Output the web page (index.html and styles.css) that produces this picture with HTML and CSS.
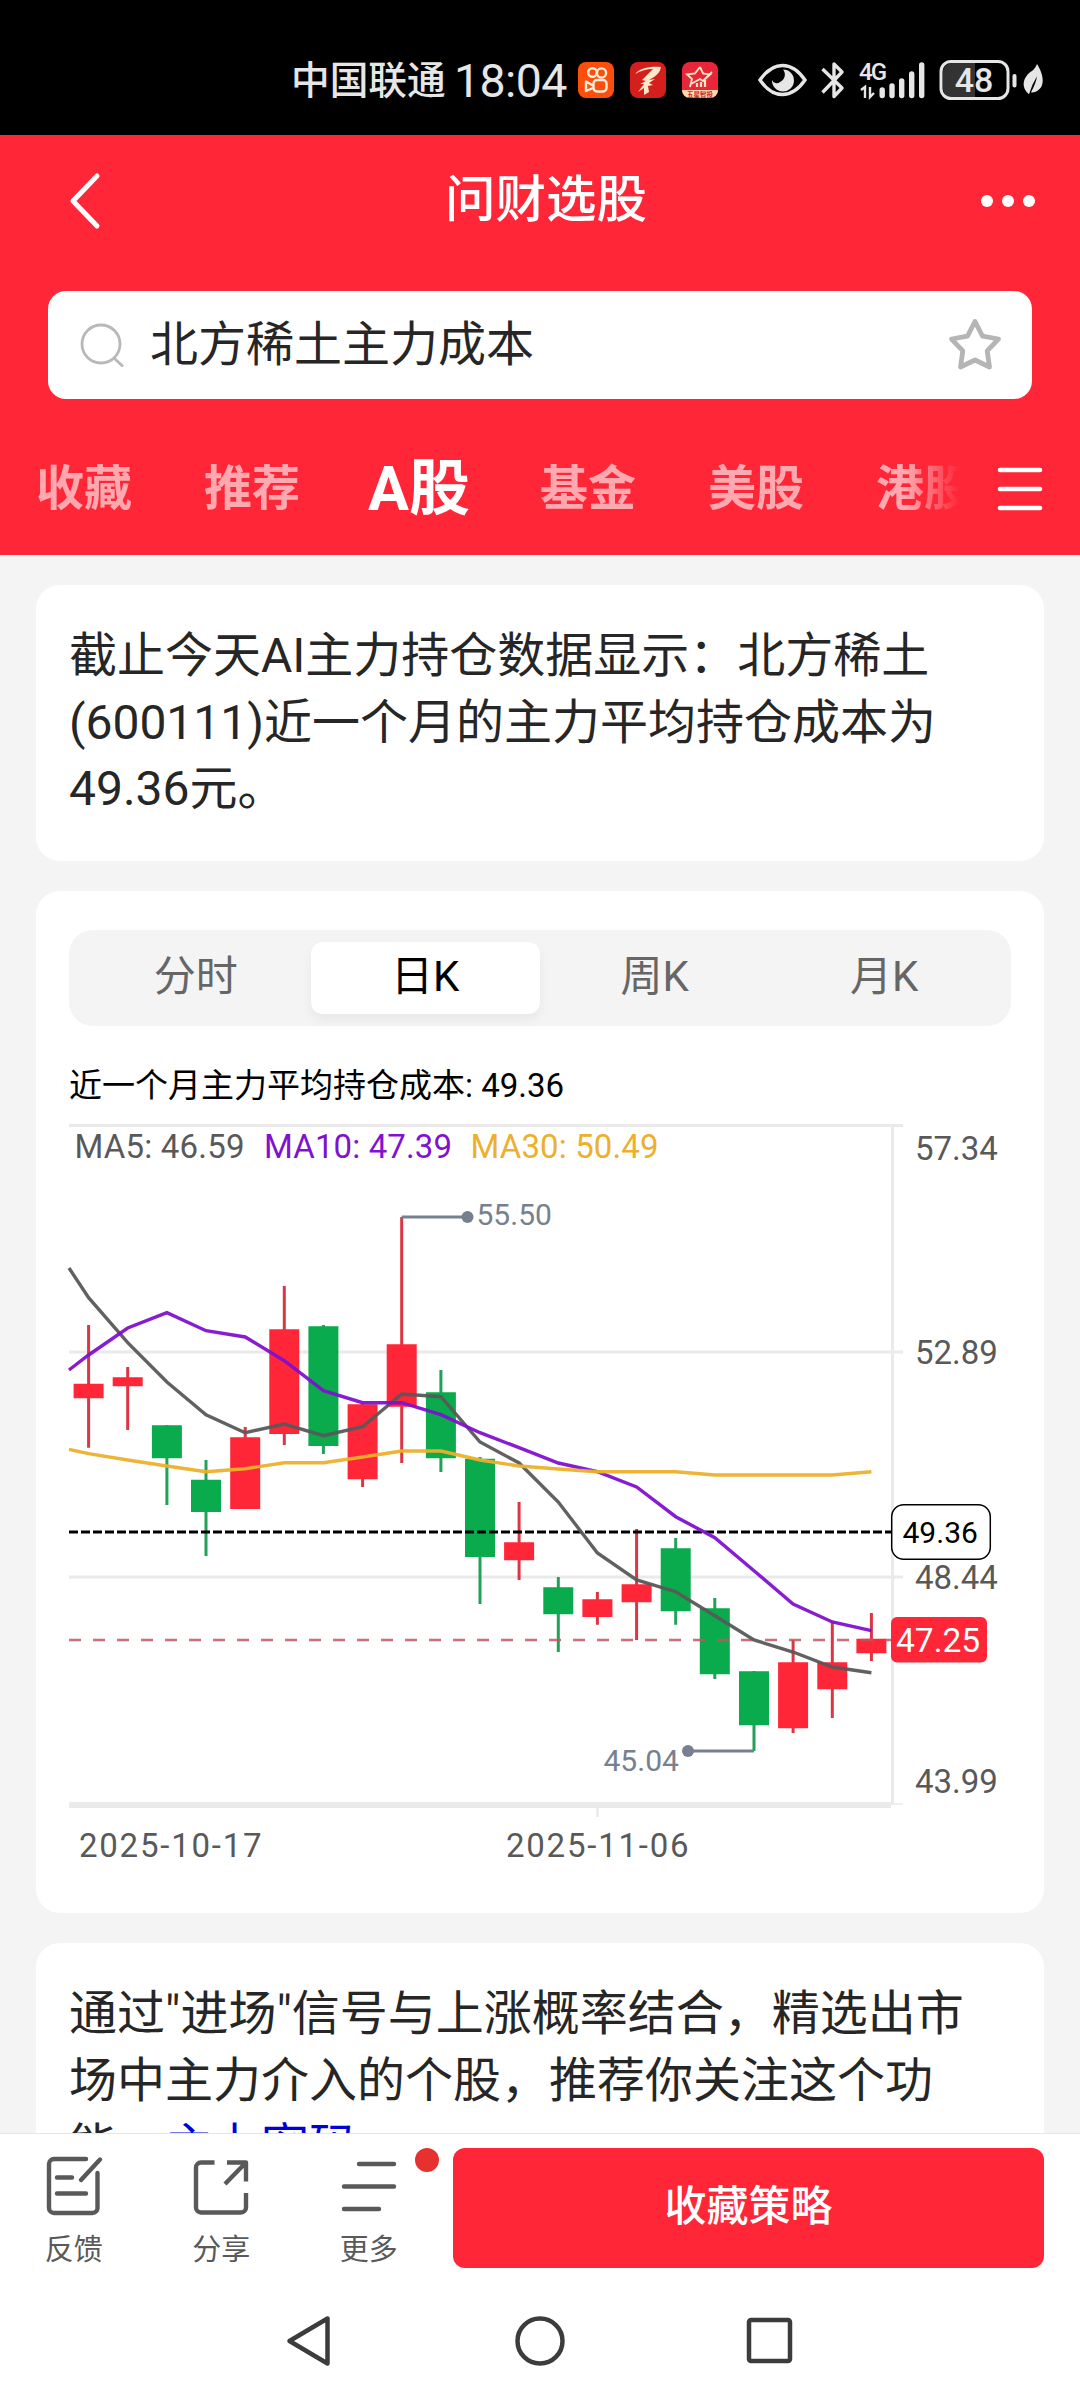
FILE: index.html
```html
<!DOCTYPE html>
<html lang="zh-CN">
<head>
<meta charset="utf-8">
<title>问财选股</title>
<link rel="stylesheet" href="styles.css">
</head>
<body>
<div class="screen">
  <div class="status">
    <span class="carrier">中国联通</span>
    <span class="clock">18:04</span>
    <svg class="apps" width="140" height="36" viewBox="578 63 140 36">
      <rect x="578" y="63" width="36" height="36" rx="8" fill="#ff4e0c"/>
      <g fill="none" stroke="#fff0dc" stroke-width="2.4">
        <circle cx="592.5" cy="73.5" r="4.3"/><circle cx="601.5" cy="74" r="4.6"/>
        <rect x="593.5" y="81" width="13" height="11.5" rx="3.5"/>
        <path d="M593 86.500l-7-4v9.500l7-3" stroke-linejoin="round"/>
      </g>
      <rect x="630" y="63" width="36" height="36" rx="8" fill="#d41f1c"/>
      <path d="M635 75c5-6 15-8 26-7c-1 6-5 9-12 13l6-1l-6 4l4 2l-5 1l1 6l-5 3v-7l-6 4l6-8l-4 0l6-3l-4-1l11-11c-7 0-13 2-18 5z" fill="#ffe9c9"/>
      <rect x="682" y="63" width="36" height="36" rx="8" fill="#e9253a"/>
      <path d="M682 91h36a8 8 0 0 1-8 8h-20a8 8 0 0 1-8-8z" fill="#ffd9a8"/>
      <path d="M700 68l3 6.500l7 1l-5 4.500M690 88l2-8l-5-4.500l8-1l5-6.500M691 85l9-5l3 2l9-9" fill="none" stroke="#ffe6c4" stroke-width="1.800"/>
      <path d="M697 88v-4M701 88v-5M705 88v-7" stroke="#ffe6c4" stroke-width="2.200"/>
      <text x="700" y="97.500" class="app-label">五星智投</text>
    </svg>
    <svg class="system" width="290" height="44" viewBox="756 58 290 44" fill="none" stroke="#e6e6e6">
      <path d="M760 80q10-14.500 22.500-14.500T805 80q-10 14.500-22.500 14.500T760 80z" stroke-width="3.400"/>
      <path d="M783 69.500a11 11 0 1 1-11 10.500a5 5 0 0 0 8 2a8 8 0 0 0 3-12.500z" fill="#e6e6e6" stroke="none"/>
      <path d="M822.500 69l19.500 19l-8 8.500v-32.500l8 8l-19.500 20.500" stroke-width="3.400" stroke-linejoin="round"/>
      <text x="859" y="80" class="net" stroke="none">4G</text>
      <path d="M861 90l4-3v11M870 87v10l4-4" stroke-width="2.400"/>
      <path d="M882.200 90v5.500M892 86v9.500M901.700 81v14.500M911.700 74v21.500M921.700 65v30.500" stroke-width="5.400" stroke-linecap="round"/>
      <path d="M952 63h23v35h-23a9 9 0 0 1-9-9v-17a9 9 0 0 1 9-9z" fill="#333" stroke="none"/>
      <rect x="941" y="61.500" width="67" height="37" rx="10" stroke-width="3"/>
      <path d="M1014.500 76v9.500" stroke-width="4" stroke-linecap="round"/>
      <text x="974" y="92" class="level" stroke="none">48</text>
      <path d="M1037 64c7 11 9 24-2 28q-2 .6-4 .3q5-9 6-16q-5 8-8 18c-9-8-5-17 1-22q5-3 7-8.300z" fill="#e6e6e6" stroke="none"/>
    </svg>
  </div>

  <header class="top">
    <div class="titlebar">
      <svg width="36" height="60" viewBox="0 0 36 60"><path d="M30 5L6 30l24 25" fill="none" stroke="#fff" stroke-width="5" stroke-linecap="round" stroke-linejoin="round"/></svg>
      <h1>问财选股</h1>
      <svg width="56" height="14" viewBox="0 0 56 14" fill="#fff"><circle cx="7" cy="7" r="6"/><circle cx="28" cy="7" r="6"/><circle cx="49" cy="7" r="6"/></svg>
    </div>
    <div class="search">
      <svg width="48" height="48" viewBox="0 0 48 48" fill="none" stroke="#b8b8b8" stroke-width="2.800"><circle cx="23" cy="23" r="19"/><path d="M36 37l9 8.500"/></svg>
      <span class="query">北方稀土主力成本</span>
      <svg width="58" height="56" viewBox="0 0 58 56"><path d="M29 4.500l7.500 14.700l16 2.800l-11.300 11.800l2.300 16.200l-14.500-7l-14.500 7l2.300-16.200L5.500 22l16-2.800z" fill="none" stroke="#b5b5b5" stroke-width="4.800" stroke-linejoin="round"/></svg>
    </div>
    <nav class="tabs">
      <div class="tablist">
        <span>收藏</span><span>推荐</span><span class="current">A股</span><span>基金</span><span>美股</span><span>港股</span>
      </div>
      <svg width="46" height="44" viewBox="0 0 46 44"><path d="M3 3h40M3 22h40M3 41h40" stroke="#fff" stroke-width="4.500" stroke-linecap="round"/></svg>
    </nav>
  </header>

  <main>
    <section class="card note">截止今天AI主力持仓数据显示：北方稀土<br>(600111)近一个月的主力平均持仓成本为<br>49.36元。</section>

    <section class="card quote">
      <div class="segments"><span>分时</span><span class="on">日K</span><span>周K</span><span>月K</span></div>
      <p class="cost">近一个月主力平均持仓成本: 49.36</p>
      <svg class="chart" width="942" height="740" viewBox="69 1120 942 740">
        <g class="grid">
          <path d="M69 1125.500H903" stroke-width="3"/>
          <path d="M69 1352H903M69 1577H903" stroke-width="3"/>
          <path d="M892.500 1125V1804" stroke-width="3"/>
          <path d="M69 1805H891" stroke-width="6"/>
          <path d="M891 1804H903" stroke-width="1.500"/>
          <path d="M597.500 1808V1817" stroke-width="2.500"/>
        </g>
        <!-- candle wicks -->
        <path class="wick up" d="M88.600 1325V1447.700M127.700 1367V1430M245.200 1427V1440M284.300 1286V1445M362.600 1404V1487M401.700 1217V1463M519.100 1502V1580M597.400 1592V1624.700M636.600 1529V1640M793.100 1640V1733M832.300 1622V1718M871.400 1613V1661"/>
        <path class="wick down" d="M166.900 1425V1505M206 1460V1556M323.400 1325V1454M440.900 1370V1472M480 1457V1604M558.300 1577V1652M675.700 1538V1624.700M714.800 1598V1679M754 1671V1751"/>
        <!-- candle bodies -->
        <path class="body up" d="M88.600 1383.700V1398.300M127.700 1377.300V1386.300M245.200 1437.300V1509M284.300 1329.300V1434M362.600 1404.300V1479.300M401.700 1344.300V1406.700M519.100 1542.300V1560.300M597.400 1599.300V1617M636.600 1584.300V1602.300M793.100 1662.300V1728.300M832.300 1662.300V1689.300M871.400 1638.700V1653.300"/>
        <path class="body down" d="M166.900 1425.300V1458.300M206 1479.700V1512M323.400 1326.300V1446M440.900 1392.300V1458.300M480 1458.700V1557M558.300 1587.300V1614.300M675.700 1548.300V1611.300M714.800 1608.300V1674.300M754 1671.300V1725.300"/>
        <!-- reference levels -->
        <path d="M69 1532H891" stroke="#000" stroke-width="3" stroke-dasharray="9 3"/>
        <path d="M69 1640H891" stroke="#c25560" stroke-opacity=".85" stroke-width="2.400" stroke-dasharray="12 12"/>
        <!-- moving averages -->
        <polyline class="ma" stroke="#595959" points="69,1268 88.600,1297.700 127.700,1342.700 166.900,1382 206,1414.700 245.200,1432.700 284.300,1424 323.400,1435.700 362.600,1426.700 401.700,1394 440.900,1396.700 480,1442 519.100,1463 558.300,1502 597.400,1553 636.600,1580 675.700,1591.700 714.800,1615.700 754,1640 793.100,1652 832.300,1667 871.400,1672.700"/>
        <polyline class="ma" stroke="#8110d0" points="69,1370 88.600,1355 127.700,1328 166.900,1312.700 206,1330.700 245.200,1337 284.300,1360.700 323.400,1390.700 362.600,1402.700 401.700,1402.700 440.900,1414.700 480,1432.700 519.100,1447.700 558.300,1463 597.400,1471.700 636.600,1487 675.700,1516.700 714.800,1537.700 754,1570.700 793.100,1604 832.300,1622 871.400,1630.700"/>
        <polyline class="ma" stroke="#ecb02b" points="69,1449.300 88.600,1453.700 127.700,1460 166.900,1466 206,1471.700 245.200,1468.700 284.300,1462.700 323.400,1462.700 362.600,1457 401.700,1451 440.900,1451 480,1460 519.100,1466 558.300,1469 597.400,1471.700 675.700,1471.700 714.800,1475 832.300,1475 871.400,1471.700"/>
        <!-- high and low markers -->
        <g class="mark">
          <path d="M401.700 1217H467M688 1751H754"/>
          <circle cx="467.500" cy="1217" r="6"/><circle cx="688" cy="1751" r="6"/>
          <text x="476.500" y="1225">55.50</text><text x="603.500" y="1770.500">45.04</text>
        </g>
        <g class="label">
          <text x="74.500" y="1158" textLength="170">MA5: 46.59</text>
          <text x="264" y="1158" textLength="188" fill="#8110d0">MA10: 47.39</text>
          <text x="470.500" y="1158" textLength="188" fill="#ecb02b">MA30: 50.49</text>
          <text x="915" y="1159.500">57.34</text>
          <text x="915" y="1363.500">52.89</text>
          <text x="915" y="1588.500">48.44</text>
          <text x="915" y="1792.500">43.99</text>
          <text x="79" y="1857" textLength="182.500">2025-10-17</text>
          <text x="506" y="1857" textLength="182.500">2025-11-06</text>
        </g>
        <rect x="891.700" y="1504.700" width="98.600" height="54.600" rx="12" fill="#fff" stroke="#000" stroke-width="1.500"/>
        <text x="902.500" y="1543" class="tag">49.36</text>
        <rect x="891" y="1617" width="96" height="45.500" rx="6" fill="#ff2637"/>
        <text x="896" y="1652" class="tag now">47.25</text>
      </svg>
    </section>

    <section class="card note">通过"进场"信号与上涨概率结合，精选出市<br>场中主力介入的个股，推荐你关注这个功<br>能，<a class="link">主力密码</a></section>
  </main>

  <footer class="actions">
    <div class="action">
      <svg width="60" height="64" viewBox="0 0 60 64"><path d="M42 5H10a5 5 0 0 0-5 5v44a5 5 0 0 0 5 5h38.500a5 5 0 0 0 5-5V19M56 5.500L37 26M13 23.500h15M13 39.500h29"/></svg>
      <span>反馈</span>
    </div>
    <div class="action">
      <svg width="60" height="64" viewBox="0 0 60 64" class="square"><path d="M23.500 8.500H10a5 5 0 0 0-5 5v40a5 5 0 0 0 5 5h40a5 5 0 0 0 5-5V39M36 8.500h19v19M54 9.500L34 30"/></svg>
      <span>分享</span>
    </div>
    <div class="action">
      <svg width="60" height="64" viewBox="0 0 60 64"><path d="M20 10h35M5 32.500h50M5 55h35"/></svg>
      <span>更多</span>
      <i class="badge"></i>
    </div>
    <button class="save">收藏策略</button>
  </footer>

  <div class="sysnav">
    <svg width="50" height="56" viewBox="0 0 50 56"><path d="M43.500 5.500v45L5.500 28z"/></svg>
    <svg width="56" height="56" viewBox="0 0 56 56"><circle cx="28" cy="28" r="22.500"/></svg>
    <svg width="50" height="56" viewBox="0 0 50 56"><rect x="3" y="7" width="41" height="41" rx="2"/></svg>
  </div>
</div>
</body>
</html>
```
FILE: styles.css
```css
* { box-sizing: border-box; }
body { margin: 0; background: #f4f4f4; font-family: Roboto, "Noto Sans CJK SC", sans-serif; }
svg { display: block; flex: none; }
.screen { width: 1080px; height: 2400px; display: flex; flex-direction: column; overflow: hidden; }

.status { height: 135px; flex: none; background: #000; color: #e6e6e6; display: flex; align-items: center; padding: 25px 34px 0 291px; }
.carrier { font-size: 38.700px; line-height: 50px; white-space: nowrap; width: 163px; font-weight: 500; padding-top: 1px; }
.clock { font-size: 46.500px; line-height: 50px; width: 124px; letter-spacing: -.6px; padding-top: 2px; }
.system { margin-left: 38px; }
.app-label { font-size: 6.500px; font-weight: 700; fill: #d02030; text-anchor: middle; }
.net { font-size: 24px; letter-spacing: -2px; fill: #e6e6e6; font-weight: 500; }
.level { font-size: 34px; text-anchor: middle; fill: #e6e6e6; font-weight: 500; }

.top { height: 420px; flex: none; background: #ff2637; color: #fff; }
.titlebar { height: 132px; display: flex; align-items: center; justify-content: space-between; padding: 0 44px 0 67px; }
.titlebar h1 { margin: 0; padding: 0 0 2px 9px; font-size: 50.500px; line-height: 60px; font-weight: 500; }
.search { height: 108px; margin: 24px 48px 0; padding: 0 28px 0 30px; background: #fff; border-radius: 18px; display: flex; align-items: center; }
.query { flex: 1; margin-left: 24px; padding-bottom: 1px; color: #262626; font-size: 48px; line-height: 60px; }
.tabs { display: flex; align-items: center; height: 120px; margin-top: 30px; padding: 0 37px 0 36px; justify-content: space-between; }
.tablist { width: 924px; overflow: hidden; display: flex; align-items: center; gap: 72px; white-space: nowrap; font-size: 48px; font-weight: 700; color: rgba(255,255,255,.6); -webkit-mask-image: linear-gradient(90deg, #000 870px, transparent 924px); mask-image: linear-gradient(90deg, #000 870px, transparent 924px); }
.tablist span { line-height: 80px; flex: none; }
.tablist .current { font-size: 61px; color: #fff; margin: 0 -2px 0 -4px; }

main { height: 1578px; flex: none; overflow: hidden; padding: 30px 36px 0; }
.card { background: #fff; border-radius: 24px; padding: 0 33px; margin-bottom: 30px; }
.note { height: 276px; padding: 38px 0 0 33px; font-size: 48px; line-height: 66.600px; color: #262626; white-space: nowrap; }
.link { color: #0000d8; }
.quote { height: 1022px; padding-top: 39px; }
.segments { height: 96px; border-radius: 24px; background: #f4f4f4; padding: 12px; display: grid; grid-template-columns: repeat(4, 1fr); }
.segments span { display: flex; align-items: center; justify-content: center; font-size: 42px; line-height: 60px; color: #666; border-radius: 12px; padding-bottom: 2px; }
.segments .on { background: #fff; color: #000; box-shadow: 0 6px 12px rgba(0,0,0,.05); }
.cost { margin: 35px 0 10px; font-size: 33px; line-height: 49px; color: #000; white-space: nowrap; }
.chart { overflow: visible; }
.grid { stroke: #eaeaea; fill: none; }
.wick { fill: none; stroke-width: 3; }
.body { fill: none; stroke-width: 30; }
.wick.up { stroke: #dc3645; }
.wick.down { stroke: #22a158; }
.body.up { stroke: #ff2637; }
.body.down { stroke: #09ab4c; }
.ma { fill: none; stroke-width: 3.400; stroke-opacity: .95; }
.mark path { stroke: #76808f; stroke-width: 3; }
.mark { fill: #76808f; font-size: 30px; }
.label { fill: #595959; font-size: 33px; }
.tag { font-size: 30px; fill: #000; }
.tag.now { font-size: 33.500px; fill: #fff; }

.actions { height: 147px; flex: none; background: #fff; border-top: 1px solid #e6e6e6; display: flex; align-items: flex-start; padding: 14px 36px 0 0; }
.action { width: 147.500px; position: relative; display: flex; flex-direction: column; align-items: center; padding-top: 6px; font-size: 29px; line-height: 40px; color: #595959; }
.action svg { fill: none; stroke: #595959; stroke-width: 4.400; stroke-linecap: round; stroke-linejoin: round; }
.action .square { stroke-linecap: butt; }
.action span { margin-top: 12px; }
.badge { position: absolute; left: 120px; top: 0; width: 24px; height: 24px; border-radius: 50%; background: #e63131; }
.save { flex: 1; margin-left: 10.500px; height: 120px; border: 0; border-radius: 12px; background: #ff2637; color: #fff; font: 500 42px/60px Roboto, "Noto Sans CJK SC", sans-serif; padding: 0 0 3px; }
.sysnav { flex: 1; background: #fff; display: flex; align-items: center; justify-content: center; gap: 178px; padding: 2px 0 0; }
.sysnav svg { fill: none; stroke: #3c3c3c; stroke-width: 4.500; stroke-linejoin: round; }
```
